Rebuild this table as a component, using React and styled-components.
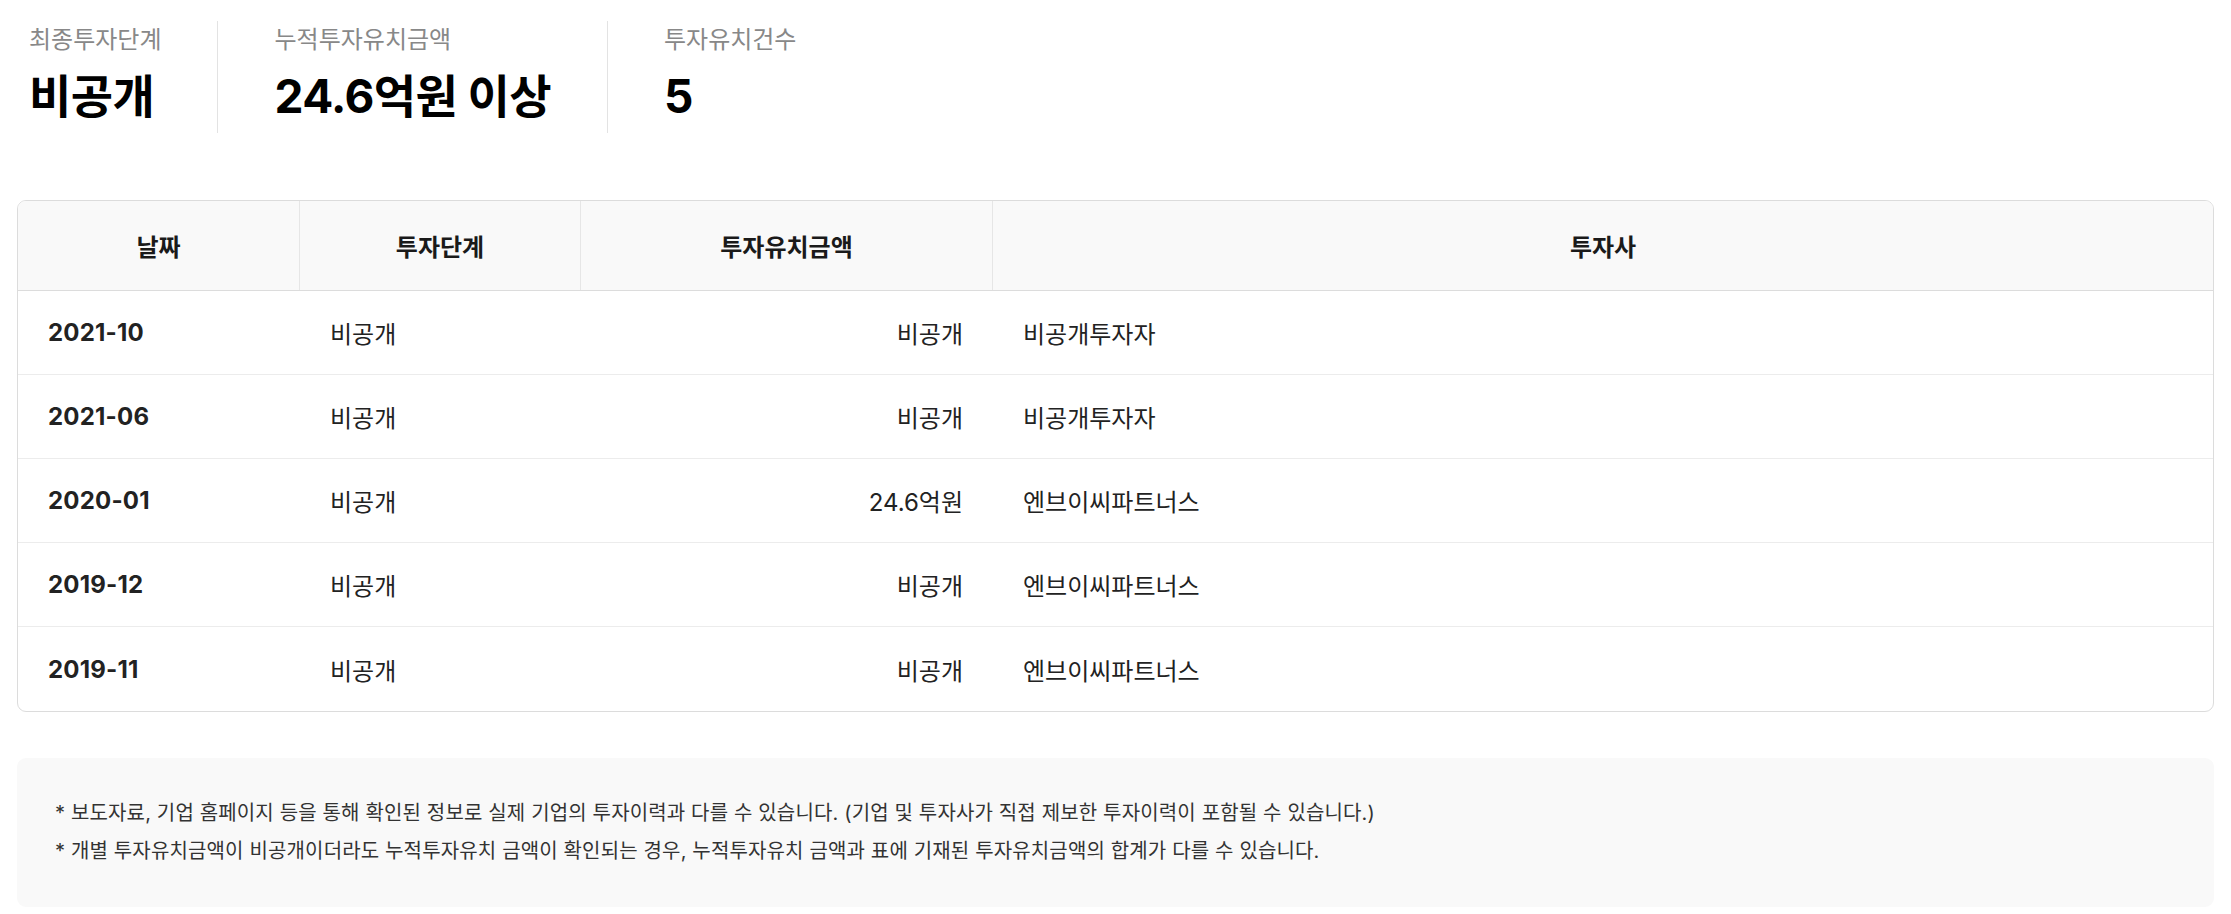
import React from "react";
import styled, { createGlobalStyle } from "styled-components";

const GlobalStyle = createGlobalStyle`
  html, body { margin: 0; padding: 0; background: #fff; }
  body {
    font-family: Inter, "Noto Sans CJK KR", "Noto Sans", sans-serif;
    color: #222;
    -webkit-font-smoothing: antialiased;
  }
  * { box-sizing: border-box; }
`;

const Page = styled.div`
  padding: 21px 17px 0;
`;

const Stats = styled.div`
  display: flex;
  padding-left: 12px;
`;

const StatItem = styled.div`
  display: flex;
  flex-direction: column;
  height: 112px;
  padding: 0 56px;
  border-left: 1px solid #e3e3e3;
  &:first-child {
    padding-left: 0;
    border-left: none;
  }
`;

const StatLabel = styled.div`
  font-size: 24px;
  line-height: 38px;
  color: #888;
  white-space: nowrap;
`;

const StatValue = styled.div`
  margin-top: 9px;
  font-size: 46px;
  line-height: 56px;
  font-weight: 700;
  color: #000;
  white-space: nowrap;
  letter-spacing: -0.6px;
`;

const Table = styled.div`
  margin-top: 67px;
  border: 1px solid #dcdcdc;
  border-radius: 9px;
  overflow: hidden;
`;

const cols = "282px 281px 412px 1fr";

const HeadRow = styled.div`
  display: grid;
  grid-template-columns: ${cols};
  height: 90px;
  background: #f9f9f9;
  border-bottom: 1px solid #dcdcdc;
`;

const HeadCell = styled.div`
  display: flex;
  align-items: center;
  justify-content: center;
  font-size: 24px;
  font-weight: 700;
  color: #1a1a1a;
  border-right: 1px solid #e6e6e6;
  &:last-child { border-right: none; }
`;

const Row = styled.div`
  display: grid;
  grid-template-columns: ${cols};
  height: 84px;
  border-bottom: 1px solid #ececec;
  &:last-child { border-bottom: none; }
`;

const Cell = styled.div`
  display: flex;
  align-items: center;
  justify-content: ${(p) => (p.$right ? "flex-end" : "flex-start")};
  padding: 0 30px;
  font-size: 24px;
  font-weight: ${(p) => (p.$bold ? 700 : 400)};
  letter-spacing: ${(p) => (p.$bold ? "0.2px" : "0")};
  color: #222;
  white-space: nowrap;
`;

const Notes = styled.div`
  margin-top: 46px;
  background: #f9f9f9;
  border-radius: 9px;
  padding: 36px 38px 37px;
`;

const Note = styled.p`
  margin: 0;
  font-size: 20px;
  line-height: 38px;
  letter-spacing: 0.15px;
  color: #333;
`;

const stats = [
  { label: "최종투자단계", value: "비공개" },
  { label: "누적투자유치금액", value: "24.6억원 이상" },
  { label: "투자유치건수", value: "5" },
];

const rows = [
  ["2021-10", "비공개", "비공개", "비공개투자자"],
  ["2021-06", "비공개", "비공개", "비공개투자자"],
  ["2020-01", "비공개", "24.6억원", "엔브이씨파트너스"],
  ["2019-12", "비공개", "비공개", "엔브이씨파트너스"],
  ["2019-11", "비공개", "비공개", "엔브이씨파트너스"],
];

export default function App() {
  return (
    <>
      <GlobalStyle />
      <Page>
        <Stats>
          {stats.map((s) => (
            <StatItem key={s.label}>
              <StatLabel>{s.label}</StatLabel>
              <StatValue>{s.value}</StatValue>
            </StatItem>
          ))}
        </Stats>

        <Table>
          <HeadRow>
            <HeadCell>날짜</HeadCell>
            <HeadCell>투자단계</HeadCell>
            <HeadCell>투자유치금액</HeadCell>
            <HeadCell>투자사</HeadCell>
          </HeadRow>
          {rows.map((r) => (
            <Row key={r[0]}>
              <Cell $bold>{r[0]}</Cell>
              <Cell>{r[1]}</Cell>
              <Cell $right>{r[2]}</Cell>
              <Cell>{r[3]}</Cell>
            </Row>
          ))}
        </Table>

        <Notes>
          <Note>
            * 보도자료, 기업 홈페이지 등을 통해 확인된 정보로 실제 기업의 투자이력과 다를 수 있습니다. (기업 및 투자사가 직접 제보한 투자이력이 포함될 수 있습니다.)
          </Note>
          <Note>
            * 개별 투자유치금액이 비공개이더라도 누적투자유치 금액이 확인되는 경우, 누적투자유치 금액과 표에 기재된 투자유치금액의 합계가 다를 수 있습니다.
          </Note>
        </Notes>
      </Page>
    </>
  );
}
